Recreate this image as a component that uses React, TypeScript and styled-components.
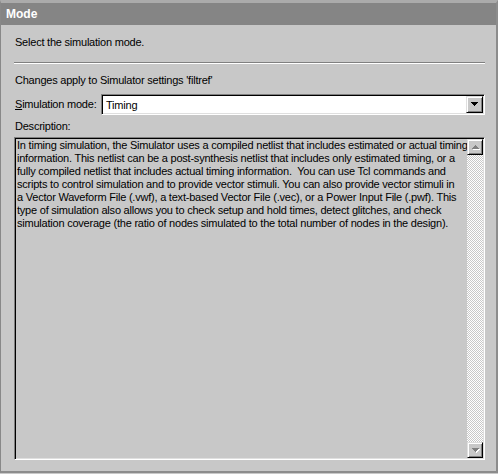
import * as React from "react";
import styled, { createGlobalStyle } from "styled-components";

const GlobalStyle = createGlobalStyle`
  html, body {
    margin: 0;
    padding: 0;
    background: #c8c8c8;
  }
  body {
    font-family: "Liberation Sans", Arial, sans-serif;
    font-size: 11px;
    letter-spacing: -0.22px;
    color: #000;
  }
`;

const descriptionLines = [
  "In timing simulation, the Simulator uses a compiled netlist that includes estimated or actual timing",
  "information. This netlist can be a post-synthesis netlist that includes only estimated timing, or a",
  "fully compiled netlist that includes actual timing information.  You can use Tcl commands and",
  "scripts to control simulation and to provide vector stimuli. You can also provide vector stimuli in",
  "a Vector Waveform File (.vwf), a text-based Vector File (.vec), or a Power Input File (.pwf). This",
  "type of simulation also allows you to check setup and hold times, detect glitches, and check",
  "simulation coverage (the ratio of nodes simulated to the total number of nodes in the design).",
];

// pixel triangle, rows 1/3/5/7 wide
const Arrow = ({
  dir,
  disabled,
}: {
  dir: "up" | "down";
  disabled?: boolean;
}) => {
  const rows = [0, 1, 2, 3].map((i) => {
    const w = 7 - i * 2;
    const y = dir === "down" ? i : 3 - i;
    return { x: i, y, w };
  });
  return (
    <svg width="8" height="5" shapeRendering="crispEdges">
      {disabled &&
        rows.map((r) => (
          <rect
            key={`s${r.y}`}
            x={r.x + 1}
            y={r.y + 1}
            width={r.w}
            height={1}
            fill="#ffffff"
          />
        ))}
      {rows.map((r) => (
        <rect
          key={r.y}
          x={r.x}
          y={r.y}
          width={r.w}
          height={1}
          fill={disabled ? "#808080" : "#000000"}
        />
      ))}
    </svg>
  );
};

const App = () => {
  return (
    <>
      <GlobalStyle />
      <Frame>
        <TitleBar>Mode</TitleBar>
        <Body>
          <Line $top={11}>Select the simulation mode.</Line>
          <Separator />
          <Line $top={10}>Changes apply to Simulator settings 'filtref'</Line>
          <ModeRow>
            <Label>
              <u>S</u>imulation mode:
            </Label>
            <Combo>
              <ComboValue>Timing</ComboValue>
              <RaisedButton $h={17}>
                <Arrow dir="down" />
              </RaisedButton>
            </Combo>
          </ModeRow>
          <Line $top={5}>Description:</Line>
          <TextBox>
            <TextContent>
              {descriptionLines.map((line, index) => (
                <TextLine key={index}>{line}</TextLine>
              ))}
            </TextContent>
            <ScrollBar>
              <RaisedButton $h={16}>
                <Arrow dir="up" disabled />
              </RaisedButton>
              <Track />
              <RaisedButton $h={16}>
                <Arrow dir="down" disabled />
              </RaisedButton>
            </ScrollBar>
          </TextBox>
        </Body>
      </Frame>
    </>
  );
};

const Frame = styled.div`
  width: 498px;
  height: 473px;
  box-sizing: border-box;
  display: flex;
  flex-direction: column;
  background: #c8c8c8;
  border-top: 3px solid #ababab;
  border-left: 1px solid #888888;
  border-right: 2px solid #8c8c8c;
  border-bottom: 2px solid #8c8c8c;
`;

const TitleBar = styled.div`
  height: 22px;
  flex: 0 0 22px;
  display: flex;
  align-items: center;
  padding-left: 5px;
  background: #858585;
  color: #ffffff;
  font-weight: bold;
  font-size: 12px;
  letter-spacing: 0;
`;

const Body = styled.div`
  flex: 1;
  display: flex;
  flex-direction: column;
  padding: 0 11px 11px 13px;
`;

const Line = styled.div<{ $top: number }>`
  margin-top: ${(p) => p.$top}px;
  padding-left: 1px;
  height: 13px;
  line-height: 13px;
  white-space: pre;
`;

const Separator = styled.div`
  margin-top: 13px;
  height: 0;
  border-top: 1px solid #808080;
  border-bottom: 1px solid #ffffff;
`;

const ModeRow = styled.div`
  margin-top: 7px;
  display: flex;
  align-items: center;
  height: 21px;
`;

const Label = styled.div`
  flex: 0 0 87px;
  padding-left: 1px;
  box-sizing: border-box;
  line-height: 13px;
  white-space: nowrap;
`;

const Sunken = styled.div`
  box-sizing: border-box;
  border: 1px solid;
  border-color: #808080 #ffffff #ffffff #808080;
  box-shadow:
    inset 1px 1px 0 #000000,
    inset -1px -1px 0 #dfdfdf;
`;

const Combo = styled(Sunken)`
  flex: 1;
  height: 21px;
  display: flex;
  align-items: stretch;
  padding: 1px;
  background: #ffffff;
`;

const ComboValue = styled.div`
  flex: 1;
  display: flex;
  align-items: center;
  padding-left: 3px;
`;

const RaisedButton = styled.div<{ $h: number }>`
  box-sizing: border-box;
  width: 16px;
  height: ${(p) => p.$h}px;
  flex: 0 0 ${(p) => p.$h}px;
  display: flex;
  align-items: center;
  justify-content: center;
  padding-left: 1px;
  background: #c8c8c8;
  border: 1px solid;
  border-color: #dfdfdf #000000 #000000 #dfdfdf;
  box-shadow:
    inset 1px 1px 0 #ffffff,
    inset -1px -1px 0 #808080;
`;

const TextBox = styled(Sunken)`
  margin-top: 4px;
  height: 323px;
  display: flex;
  padding: 1px;
  background: #c8c8c8;
`;

const TextContent = styled.div`
  flex: 1;
  padding: 0 0 0 1px;
  overflow: hidden;
`;

const TextLine = styled.div`
  height: 13px;
  line-height: 13px;
  white-space: pre;
`;

const ScrollBar = styled.div`
  width: 16px;
  display: flex;
  flex-direction: column;
`;

const Track = styled.div`
  flex: 1;
  background-image: conic-gradient(
    #ffffff 25%,
    #c8c8c8 0 50%,
    #ffffff 0 75%,
    #c8c8c8 0
  );
  background-size: 2px 2px;
`;

export default App;
